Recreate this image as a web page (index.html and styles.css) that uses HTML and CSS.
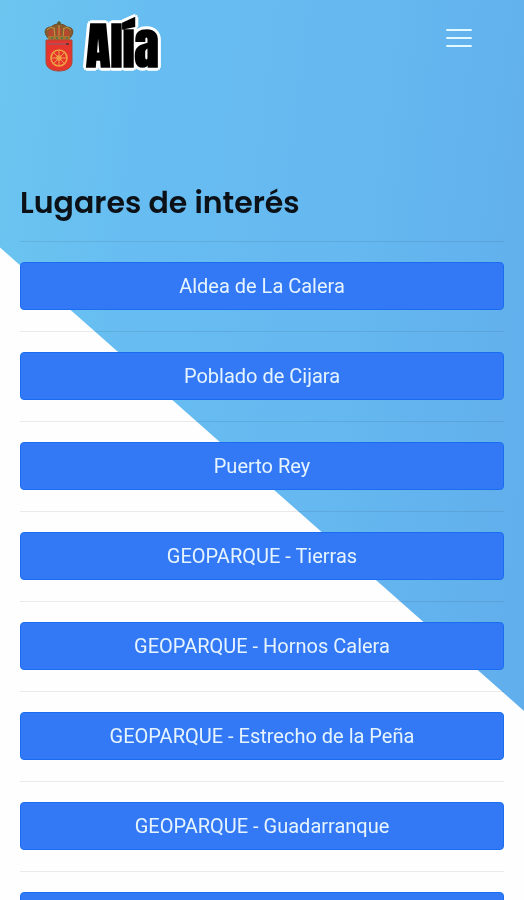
FILE: index.html
```
<!DOCTYPE html>
<html lang="es">
<head>
    <meta charset="UTF-8">
    <meta name="viewport" content="width=device-width, initial-scale=1.0">
    <title>Alía - Lugares de interés</title>
    <link rel="stylesheet" href="styles.css">
</head>

<body>
    <header class="header">
        <a class="logo" href="#">
            <svg class="escudo" viewBox="0 0 30 52" aria-hidden="true">
                <!-- Corona -->
                <path d="M15 1v5M13 3h4" stroke="#5b5a2e" stroke-width="1.4"/>
                <path d="M4 18C-1 12 1 7 7 7c2-2 5-3 8-3s6 1 8 3c6 0 8 5 3 11z" fill="#8a5a2c" stroke="#6b4a22"/>
                <path d="M5 16C3 11 6 9 9 9l2 7zM13 16V8h4v8zM19 16l2-7c3 0 6 2 4 7z" fill="#b5482f"/>
                <path d="M3 10c3-3 5-3 8-1M27 10c-3-3-5-3-8-1M15 5v12M10 8l1 9M20 8l-1 9" fill="none" stroke="#c79a45" stroke-width="1"/>
                <rect x="4" y="16" width="22" height="4" rx="1" fill="#a9742f"/>
                <path d="M7 18h2m3 0h2m3 0h2m3 0h2" stroke="#3f7a4d" stroke-width="1.5"/>
                <!-- Escudo -->
                <path d="M2 20h26v22c0 6-6 9-13 9S2 48 2 42z" fill="#e5352c" stroke="#a64a3c"/>
                <path d="M4 24h19" stroke="#b54a50" stroke-width="2"/>
                <path d="M22 24h3" stroke="#6d3434" stroke-width="2"/>
                <g fill="none" stroke="#f0a044">
                    <circle cx="15" cy="38" r="8" stroke-width="1.6"/>
                    <circle cx="15" cy="38" r="2" stroke-width="1.4"/>
                    <path d="M15 30v16M7 38h16M9 32l12 12M21 32L9 44" stroke-width="1"/>
                </g>
            </svg>
            <span class="logo-texto">Alía</span>
        </a>
        <button class="menu" type="button" aria-label="Menú">
            <svg class="menu-icono" viewBox="0 0 26 20" aria-hidden="true">
                <path d="M1 2h24M1 10h24M1 18h24" stroke="#e2f8ff" stroke-width="2" stroke-linecap="round"/>
            </svg>
        </button>
    </header>

    <main class="contenido">
        <h1>Lugares de interés</h1>
        <hr>
        <a class="boton" href="#">Aldea de La Calera</a>
        <hr>
        <a class="boton" href="#">Poblado de Cijara</a>
        <hr>
        <a class="boton" href="#">Puerto Rey</a>
        <hr>
        <a class="boton" href="#">GEOPARQUE - Tierras</a>
        <hr>
        <a class="boton" href="#">GEOPARQUE - Hornos Calera</a>
        <hr>
        <a class="boton" href="#">GEOPARQUE - Estrecho de la Peña</a>
        <hr>
        <a class="boton" href="#">GEOPARQUE - Guadarranque</a>
        <hr>
        <a class="boton" href="#" aria-label="Siguiente lugar"></a>
    </main>
</body>
</html>
```

FILE: styles.css
```
* {
    box-sizing: border-box;
}

body {
    margin: 0;
    height: 100vh;
    overflow: hidden auto;
    scrollbar-width: none;
    font-family: Roboto, sans-serif;
    background-color: #fefefe;
}

/* Fondo azul en diagonal */
body::before {
    content: "";
    position: fixed;
    inset: 0;
    z-index: -1;
    background: linear-gradient(97deg, #6bc5ef 0%, #67bdf1 25%, #65b8f0 60%, #60adeb 100%);
    clip-path: polygon(0 0, 100% 0, 100% 79%, 0 27.5%);
}

.header {
    display: flex;
    justify-content: space-between;
    align-items: flex-start;
    padding: 20px 52px 0 44px;
}

.logo {
    display: flex;
    align-items: center;
    gap: 12px;
    text-decoration: none;
}

.escudo {
    width: 30px;
    height: 52px;
}

.logo-texto {
    font-family: Impact, Anton, "Roboto Condensed", Roboto, sans-serif;
    font-size: 50px;
    line-height: 52px;
    font-weight: 700;
    color: #000;
    text-shadow: 3px 0 #fff, -3px 0 #fff, 0 3px #fff, 0 -3px #fff, 2px 2px #fff, -2px 2px #fff, 2px -2px #fff, -2px -2px #fff;
}

.menu {
    display: flex;
    margin-top: 8px;
    padding: 0;
    border: none;
    background: none;
    cursor: pointer;
}

.menu-icono {
    width: 26px;
    height: 20px;
}

.contenido {
    padding: 114px 20px 20px;
}

h1 {
    margin: 0;
    font-family: Poppins, Inter, sans-serif;
    font-size: 30px;
    line-height: 34px;
    font-weight: 600;
    color: #0b1117;
}

hr {
    height: 1px;
    margin: 21px 0 20px;
    border: none;
    background-color: rgba(0, 0, 0, 0.08);
}

.boton {
    display: block;
    min-height: 48px;
    padding: 8px 12px;
    border: 1px solid #1a6df0;
    border-radius: 4px;
    background-color: #3379f6;
    color: #e6f4ff;
    font-size: 20px;
    line-height: 30px;
    text-align: center;
    text-decoration: none;
}

.boton:hover {
    background-color: #0069d9;
}
```
